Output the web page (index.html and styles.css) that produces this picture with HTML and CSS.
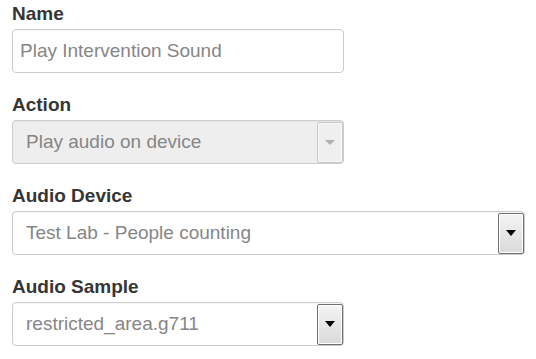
FILE: index.html
```html
<!DOCTYPE html>
<html>
<head>
<meta charset="utf-8">
<link rel="stylesheet" href="styles.css">
</head>
<body>
<form class="form">
  <div class="group">
    <div class="label">Name</div>
    <div class="field field-input w-short"><span class="value">Play Intervention Sound</span></div>
  </div>
  <div class="group">
    <div class="label">Action</div>
    <div class="field field-select disabled w-short"><span class="value">Play audio on device</span><span class="btn"><span class="tri"></span></span></div>
  </div>
  <div class="group">
    <div class="label">Audio Device</div>
    <div class="field field-select w-long"><span class="value">Test Lab - People counting</span><span class="btn"><span class="tri"></span></span></div>
  </div>
  <div class="group">
    <div class="label">Audio Sample</div>
    <div class="field field-select w-short"><span class="value">restricted_area.g711</span><span class="btn"><span class="tri"></span></span></div>
  </div>
</form>
</body>
</html>
```
FILE: styles.css
```css
html, body {
  margin: 0;
  padding: 0;
  background: #ffffff;
}
body {
  font-family: "Liberation Sans", Arial, sans-serif;
}
.form {
  display: flex;
  flex-direction: column;
  gap: 22px;
  padding: 4px 0 0 12px;
}
.group {
  display: flex;
  flex-direction: column;
  gap: 5px;
}
.label {
  font-size: 19px;
  line-height: 20px;
  font-weight: bold;
  color: #363636;
}
.field {
  box-sizing: border-box;
  height: 44px;
  border: 1px solid #cdcdcd;
  border-radius: 4px;
  display: flex;
  align-items: center;
  background: #ffffff;
  box-shadow: inset 0 1px 1px rgba(0,0,0,0.04);
}
.w-short { width: 332px; }
.w-long { width: 513px; }
.value {
  flex: 1;
  font-size: 19px;
  color: #868686;
  white-space: nowrap;
}
.field-input .value { padding-left: 7px; }
.field-select .value { padding-left: 13px; }
.field.disabled {
  background: #eeeeee;
}
.btn {
  box-sizing: border-box;
  width: 26px;
  height: 41px;
  margin-right: 0px;
  border: 1px solid #6f6f6f;
  border-radius: 2px;
  background: linear-gradient(#f4f4f4, #dadada);
  box-shadow: inset 0 0 0 1px #ffffff;
  display: flex;
  align-items: center;
  justify-content: center;
}
.tri {
  width: 0;
  height: 0;
  border-left: 5px solid transparent;
  border-right: 5px solid transparent;
  border-top: 6px solid #000000;
}
.disabled .btn {
  border-color: #c9c9c9;
  background: #efefef;
  box-shadow: inset 0 0 0 1px #f8f8f8;
}
.disabled .tri {
  border-top-color: #b0b0b0;
  border-left-width: 5px;
  border-right-width: 5px;
  border-top-width: 5px;
}
```
